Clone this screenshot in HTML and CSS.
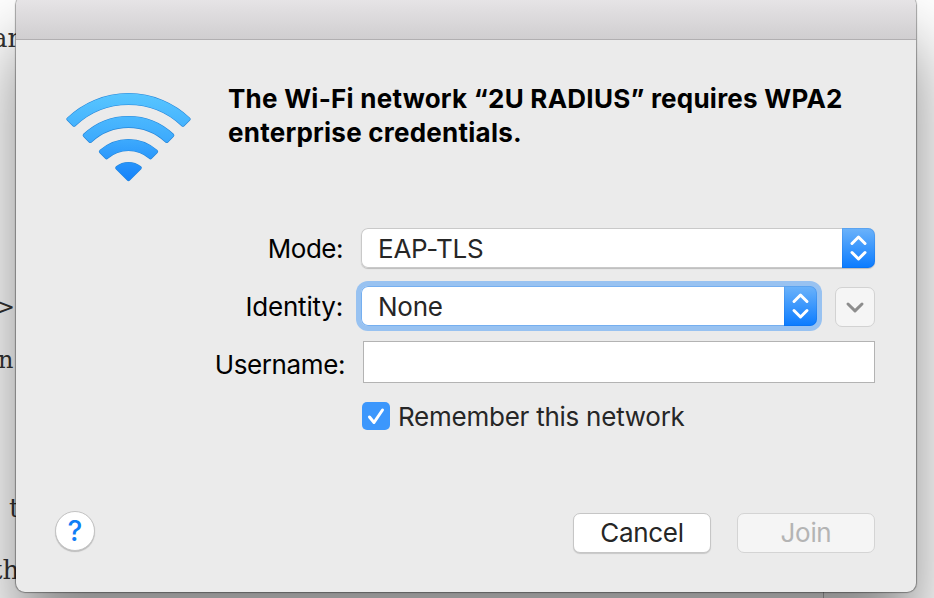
FILE: index.html
```
<!DOCTYPE html>
<html lang="en">

	<head>
		<meta charset="UTF-8">
		<title>Wi-Fi</title>
		<link rel="stylesheet" href="styles.css">
	</head>

	<body>
		<!-- page behind the dialog -->
		<div class="behind">
			<span class="word w1">an</span>
			<span class="word w2">&gt;</span>
			<span class="word w3">n</span>
			<span class="word w4">t</span>
			<span class="word w5">th</span>
			<i class="rule"></i>
		</div>
		<div class="dialog">
			<div class="titlebar"></div>
			<div class="content">
				<div class="head">
					<svg class="wifi" width="126" height="92" viewBox="-63.5 -90 126 92">
						<defs>
							<linearGradient id="blue" gradientUnits="userSpaceOnUse" x1="0" y1="-89" x2="0" y2="0">
								<stop offset="0" stop-color="#58c6ff"/>
								<stop offset="0.5" stop-color="#3facfd"/>
								<stop offset="1" stop-color="#1481fa"/>
							</linearGradient>
							<g id="waves">
								<path d="M-60.1-62.9A87 87 0 0 1 60.1-62.9L54.4-57.3A79 79 0 0 0-54.4-57.3Z"/>
								<path d="M-43.8-46.7A64 64 0 0 1 43.8-46.7L38.2-41A56 56 0 0 0-38.2-41Z"/>
								<path d="M-27.6-30.4A41 41 0 0 1 27.6-30.4L21.9-24.7A33 33 0 0 0-21.9-24.7Z"/>
								<path d="M-11.3-14.1A18 18 0 0 1 11.3-14.1L0-2.8Z"/>
							</g>
						</defs>
						<use href="#waves" class="edge"/>
						<use href="#waves" class="fill"/>
					</svg>
					<h1>The Wi-Fi network “2U RADIUS” requires WPA2<br>enterprise credentials.</h1>
				</div>
				<div class="row">
					<label class="mode">Mode:</label>
					<div class="select">
						<span>EAP-TLS</span>
						<b class="arrows"><svg width="33" height="40"><path d="M10 15.5L16.5 9L23 15.5M10 24.5L16.5 31L23 24.5"/></svg></b>
					</div>
				</div>
				<div class="row">
					<label>Identity:</label>
					<div class="select focus">
						<span>None</span>
						<b class="arrows"><svg width="33" height="40"><path d="M10 15.5L16.5 9L23 15.5M10 24.5L16.5 31L23 24.5"/></svg></b>
					</div>
					<button class="more"><svg width="38" height="38"><path d="M12 16L19 22.8L26 16"/></svg></button>
				</div>
				<div class="row">
					<label class="user">Username:</label>
					<input class="field" type="text">
				</div>
				<div class="remember">
					<i class="check"><svg width="28" height="28"><path d="M7.5 15L12 20.5L20.5 8"/></svg></i>
					<span>Remember this network</span>
				</div>
				<div class="foot">
					<button class="help">?</button>
					<button class="btn cancel">Cancel</button>
					<button class="btn join" disabled>Join</button>
				</div>
			</div>
		</div>
	</body>

</html>
```

FILE: styles.css
```
* {
	box-sizing: border-box;
}
body {
	margin: 0;
	height: 598px;
	overflow: hidden;
	background: #fff;
	font-family: Inter, "Liberation Sans", sans-serif;
	font-size: 26px;
	color: #000;
}
.behind {
	position: absolute;
	top: 0;
	left: 0;
	width: 934px;
	height: 598px;
	overflow: hidden;
	font: 26px/30px "DejaVu Serif", serif;
	color: #333;
}
.word { position: absolute; }
.w1 { left: -8px; top: 23px; }
.w2 { left: -5px; top: 292px; font-size: 24px; }
.w3 { left: -2px; top: 345px; font-size: 24px; }
.w4 { left: 9px; top: 493px; }
.w5 { left: -8px; top: 555px; }
.rule {
	position: absolute;
	left: 823px;
	top: 592px;
	width: 1px;
	height: 6px;
	background: #bbb;
}
.dialog {
	position: relative;
	width: 900px;
	height: 596px;
	margin: -4px 0 0 16px;
	border-radius: 9px;
	background: #ebebeb;
	box-shadow: 0 0 1px 1px rgba(0,0,0,.35), 0 48px 70px rgba(0,0,0,.48);
}
.titlebar {
	height: 44px;
	border-radius: 9px 9px 0 0;
	border-bottom: 1px solid #b1afb1;
	background: linear-gradient(#e8e6e8, #d0ced0);
}
.content {
	padding: 42px 41px 0 39px;
}
.head {
	display: flex;
	height: 146px;
}
.wifi {
	display: block;
	margin: 10px 0 0 10px;
}
.edge {
	fill: #2585d8;
	stroke: #2585d8;
	stroke-width: 4;
	stroke-linejoin: round;
}
.fill {
	fill: url(#blue);
	stroke: url(#blue);
	stroke-width: 2.8;
	stroke-linejoin: round;
}
h1 {
	margin: 0 0 0 37px;
	font-size: 26px;
	line-height: 34px;
	font-weight: 700;
	letter-spacing: .24px;
	white-space: nowrap;
}
.row {
	display: flex;
	align-items: center;
	height: 40px;
	margin-bottom: 18px;
}
label {
	width: 288px;
	margin-right: 18px;
	text-align: right;
	letter-spacing: -.2px;
	white-space: nowrap;
}
.mode {
	letter-spacing: -.5px;
}
.select {
	display: flex;
	align-items: center;
	justify-content: space-between;
	width: 514px;
	height: 40px;
	padding-left: 17px;
	border-radius: 7px;
	background: #fff;
	color: #262626;
	letter-spacing: -.25px;
	box-shadow: inset 0 0 0 1px #c9c9c9, 0 1px 1px rgba(0,0,0,.2);
}
.select.focus {
	width: 456px;
	box-shadow: 0 0 0 5px #98c2f1, inset 0 0 0 1px #75aff0;
}
.arrows {
	width: 33px;
	height: 40px;
	border-radius: 0 7px 7px 0;
	background: linear-gradient(#6cb3fa, #0a7bff);
	box-shadow: inset 0 0 0 1px rgba(0,80,190,.15);
}
svg {
	display: block;
}
.arrows path, .more path, .check path {
	fill: none;
	stroke: #fff;
	stroke-width: 3;
	stroke-linecap: round;
	stroke-linejoin: round;
}
.more {
	width: 40px;
	height: 40px;
	margin: 2px 0 0 18px;
	padding: 0;
	border: 1px solid #d2d2d2;
	border-radius: 7px;
	background: #f5f5f5;
}
.more path {
	stroke: #8d8d8d;
}
.user {
	width: 290px;
	letter-spacing: -.4px;
}
.field {
	align-self: flex-start;
	width: 512px;
	height: 42px;
	margin-top: -3px;
	border: 1px solid #b3b3b3;
	background: #fff;
}
.remember {
	display: flex;
	align-items: center;
	height: 32px;
	margin: -2px 0 0 307px;
	color: #262626;
	letter-spacing: -.25px;
}
.check {
	width: 28px;
	height: 28px;
	margin-right: 8px;
	border-radius: 5px;
	background: #3c97fc;
}
.foot {
	display: flex;
	margin-top: 81px;
}
.help {
	width: 40px;
	height: 40px;
	margin-top: -2px;
	padding: 0;
	border: 1px solid #c3c3c3;
	border-radius: 50%;
	background: #fff;
	box-shadow: 0 1px 1px rgba(0,0,0,.2);
	font: 500 28px/36px Inter, sans-serif;
	color: #0f7ef5;
}
.btn {
	width: 138px;
	height: 40px;
	padding: 0;
	border: 1px solid #c6c6c6;
	border-radius: 7px;
	background: #fff;
	box-shadow: 0 1px 1px rgba(0,0,0,.15);
	font: 26px/36px Inter, sans-serif;
	letter-spacing: -.3px;
	color: #262626;
}
.cancel {
	margin-left: auto;
}
.join {
	margin-left: 26px;
	border-color: #d4d4d4;
	background: #f5f5f5;
	box-shadow: none;
	color: #b4b4b4;
}
```
